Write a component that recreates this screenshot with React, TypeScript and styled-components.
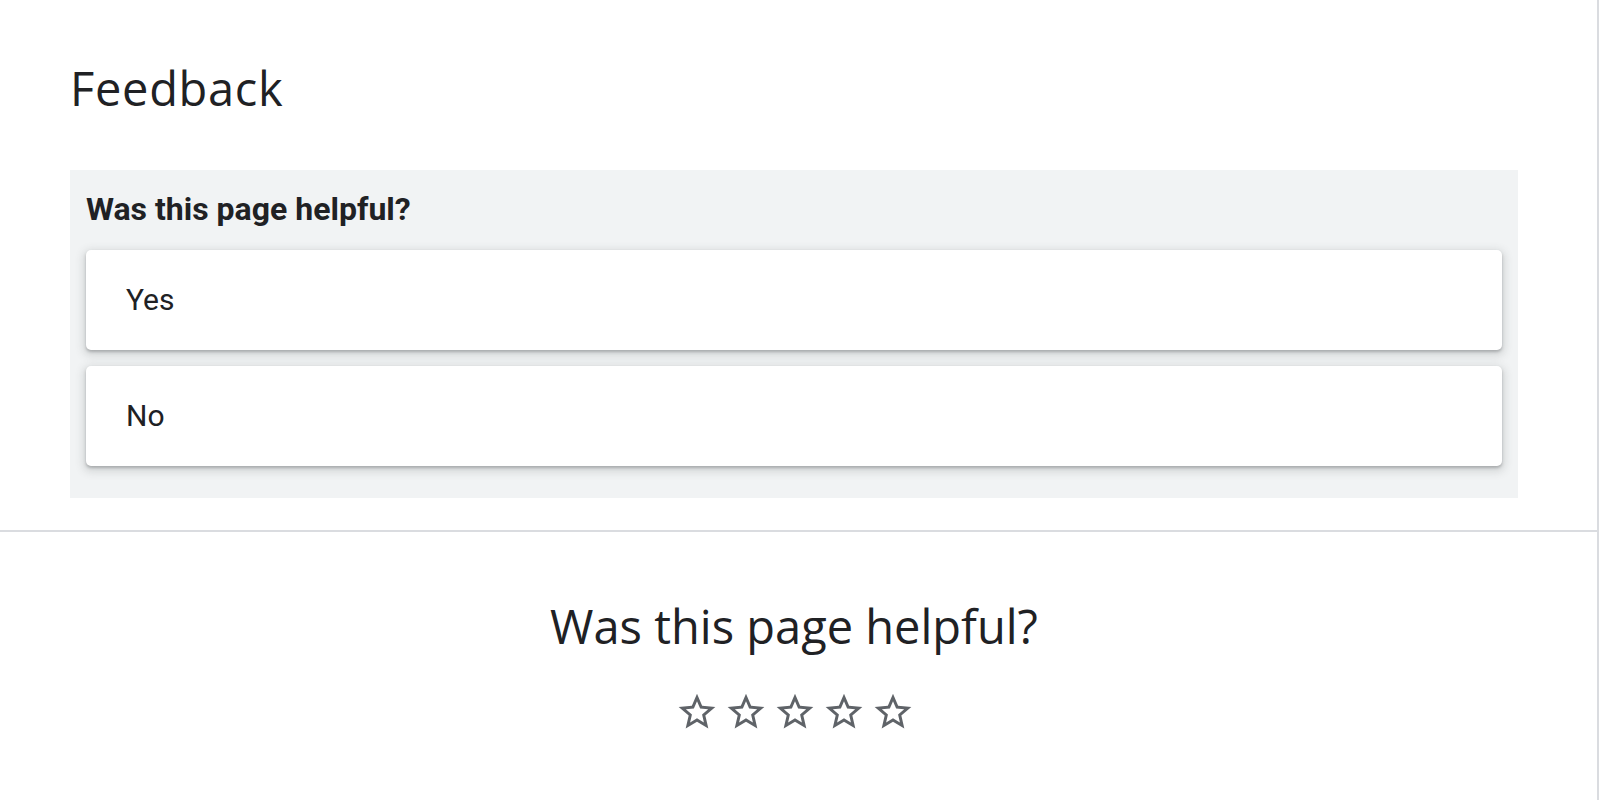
import React from "react";
import styled, { createGlobalStyle } from "styled-components";

const GlobalStyle = createGlobalStyle`
  html, body {
    margin: 0;
    padding: 0;
    background: #ffffff;
  }
  body {
    font-family: "Open Sans", "Noto Sans", sans-serif;
    color: #202124;
  }
`;

const Page = styled.div`
  width: 1599px;
  min-height: 800px;
  box-sizing: border-box;
  border-right: 2px solid #dadce0;
  display: flex;
  flex-direction: column;
`;

const TopSection = styled.section`
  padding: 60px 79px 32px 70px;
  display: flex;
  flex-direction: column;
`;

const Title = styled.h1`
  margin: 0;
  font-family: "Open Sans", "Noto Sans", sans-serif;
  font-weight: 400;
  font-size: 47px;
  line-height: 56px;
  letter-spacing: 0.7px;
  color: #202124;
`;

const Panel = styled.div`
  margin-top: 54px;
  background: #f1f3f4;
  padding: 19px 16px 32px 16px;
  display: flex;
  flex-direction: column;
`;

const PanelHeading = styled.h2`
  margin: 0 0 21px 0;
  font-family: Roboto, "Liberation Sans", sans-serif;
  font-weight: 700;
  font-size: 32px;
  line-height: 40px;
  color: #202124;
`;

const Options = styled.div`
  display: flex;
  flex-direction: column;
  gap: 16px;
`;

const OptionCard = styled.button`
  all: unset;
  box-sizing: border-box;
  height: 100px;
  background: #ffffff;
  border-radius: 5px;
  box-shadow: 0 2px 3px rgba(60, 64, 67, 0.3), 0 3px 9px 3px rgba(60, 64, 67, 0.15);
  display: flex;
  align-items: center;
  padding: 0 40px;
  font-family: Roboto, "Liberation Sans", sans-serif;
  font-size: 30px;
  line-height: 36px;
  color: #202124;
  cursor: pointer;
`;

const Footer = styled.section`
  border-top: 2px solid #dadce0;
  padding: 66px 9px 40px 0;
  display: flex;
  flex-direction: column;
  align-items: center;
`;

const FooterHeading = styled.h2`
  margin: 0;
  font-family: "Open Sans", "Noto Sans", sans-serif;
  font-weight: 400;
  font-size: 47px;
  line-height: 56px;
  color: #202124;
`;

const Stars = styled.div`
  margin-top: 36px;
  display: flex;
  gap: 5px;
  padding-left: 1px;
`;

const StarButton = styled.button`
  all: unset;
  width: 44px;
  height: 44px;
  display: flex;
  cursor: pointer;
  color: #5f6368;
  svg {
    width: 100%;
    height: 100%;
  }
`;

const StarIcon = () => (
  <svg viewBox="0 0 24 24" fill="currentColor" aria-hidden="true">
    <path d="M22 9.24l-7.19-.62L12 2 9.19 8.63 2 9.24l5.46 4.73L5.82 21 12 17.27 18.18 21l-1.63-7.03L22 9.24zM12 15.4l-3.76 2.27 1-4.28-3.32-2.88 4.38-.38L12 6.1l1.71 4.04 4.38.38-3.32 2.88 1 4.28L12 15.4z" />
  </svg>
);

export default function App() {
  return (
    <>
      <GlobalStyle />
      <Page>
        <TopSection>
          <Title>Feedback</Title>
          <Panel>
            <PanelHeading>Was this page helpful?</PanelHeading>
            <Options>
              <OptionCard>Yes</OptionCard>
              <OptionCard>No</OptionCard>
            </Options>
          </Panel>
        </TopSection>
        <Footer>
          <FooterHeading>Was this page helpful?</FooterHeading>
          <Stars>
            {[1, 2, 3, 4, 5].map((n) => (
              <StarButton key={n} aria-label={`${n} star`}>
                <StarIcon />
              </StarButton>
            ))}
          </Stars>
        </Footer>
      </Page>
    </>
  );
}
